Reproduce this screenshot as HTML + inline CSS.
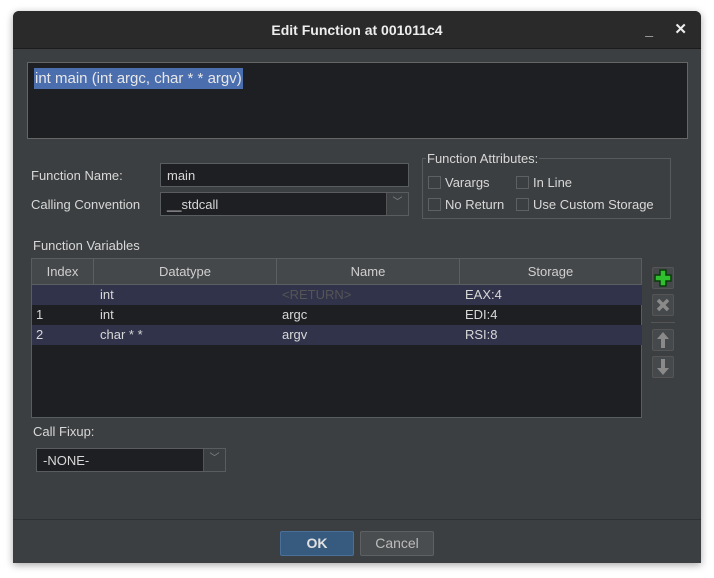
<!DOCTYPE html>
<html><head><style>
*{box-sizing:border-box;margin:0;padding:0}
body{width:714px;height:578px;background:#fff;font-family:"Liberation Sans",sans-serif;font-size:13px;color:#d8d8d8;position:relative;overflow:hidden}
.a{position:absolute}
.win{left:13px;top:11px;width:688px;height:552px;background:#3c3f41;border-radius:6px 6px 0 0;box-shadow:0 2px 8px rgba(0,0,0,.35);overflow:hidden}
.title{left:0;top:0;width:688px;height:38px;background:#2a2a2a;border-bottom:1px solid #1c1c1c;color:#eee;font-weight:bold;font-size:14px;text-align:center;line-height:38px}
.inp{background:#1e1f22;border:1px solid #5a5d60}
.cb{width:13px;height:13px;border:1px solid #5e6164;background:#3c3f41;display:inline-block;vertical-align:-2px;margin-right:4px}
.th{background:#45484a;border-right:1px solid #5c5f61;text-align:center;line-height:25px;color:#cfcfcf}
.row{left:0;width:610px;height:20px;line-height:20px}
.row span{position:absolute}
.ib{width:22px;height:22px;border:1px solid #555;border-radius:2px;background:#46494b}
</style></head><body>
<div class="a win">
 <div class="a title">Edit Function at 001011c4<span class="a" style="right:48px;top:0">_</span><span class="a" style="right:14px;top:0;font-size:15px">✕</span></div>
 <div class="a inp" style="left:14px;top:51px;width:661px;height:77px;border-color:#666">
  <span class="a" style="left:6px;top:5px;background:#4b6eaf;color:#e8e8e8;font-size:15px;padding:1px 1px;line-height:19px">int main (int argc, char * * argv)</span>
 </div>
 <div class="a" style="left:18px;top:157px">Function Name:</div>
 <div class="a inp" style="left:147px;top:152px;width:249px;height:24px;padding:4px 6px">main</div>
 <div class="a" style="left:18px;top:186px">Calling Convention</div>
 <div class="a inp" style="left:147px;top:181px;width:249px;height:24px;padding:4px 6px">__stdcall<span class="a" style="right:0;top:0;width:22px;height:22px;background:#3c3f41;border-left:1px solid #555;text-align:center;line-height:20px;color:#888;font-size:10px">﹀</span></div>
 <div class="a" style="left:409px;top:147px;width:249px;height:61px;border:1px solid #585b5e"></div>
 <div class="a" style="left:413px;top:140px;background:#3c3f41;padding:0 1px">Function Attributes:</div>
 <div class="a" style="left:415px;top:164px"><span class="cb"></span>Varargs</div>
 <div class="a" style="left:503px;top:164px"><span class="cb"></span>In Line</div>
 <div class="a" style="left:415px;top:186px"><span class="cb"></span>No Return</div>
 <div class="a" style="left:503px;top:186px"><span class="cb"></span>Use Custom Storage</div>
 <div class="a" style="left:20px;top:227px">Function Variables</div>
 <div class="a" style="left:18px;top:247px;width:611px;height:160px;background:#1e1f22;border:1px solid #5a5d60">
  <div class="a th" style="left:0;top:0;width:62px;height:25px">Index</div>
  <div class="a th" style="left:62px;top:0;width:183px;height:25px">Datatype</div>
  <div class="a th" style="left:245px;top:0;width:183px;height:25px">Name</div>
  <div class="a th" style="left:428px;top:0;width:181px;height:25px;border-right:0">Storage</div>
  <div class="a" style="left:0;top:25px;width:609px;height:1px;background:#5c5f61"></div>
  <div class="a row" style="top:26px;background:#30334a"><span style="left:68px">int</span><span style="left:250px;color:#555">&lt;RETURN&gt;</span><span style="left:433px">EAX:4</span></div>
  <div class="a row" style="top:46px"><span style="left:4px">1</span><span style="left:68px">int</span><span style="left:250px">argc</span><span style="left:433px">EDI:4</span></div>
  <div class="a row" style="top:66px;background:#30334a"><span style="left:4px">2</span><span style="left:68px">char * *</span><span style="left:250px">argv</span><span style="left:433px">RSI:8</span></div>
 </div>
 <div class="a ib" style="left:639px;top:256px"><svg width="20" height="20" viewBox="0 0 20 20"><path d="M7 2h6v5h5v6h-5v5H7v-5H2V7h5z" fill="#2fbf2f" stroke="#0a3a0a" stroke-width="1.5"/></svg></div>
 <div class="a ib" style="left:639px;top:283px"><svg width="20" height="20" viewBox="0 0 20 20"><path d="M5 5l10 10M15 5L5 15" stroke="#8a8a8a" stroke-width="3.5"/></svg></div>
 <div class="a" style="left:638px;top:311px;width:24px;height:1px;background:#555"></div>
 <div class="a ib" style="left:639px;top:318px"><svg width="20" height="20" viewBox="0 0 20 20"><path d="M10 2l6 7h-4v9H8V9H4z" fill="#8a8a8a"/></svg></div>
 <div class="a ib" style="left:639px;top:345px"><svg width="20" height="20" viewBox="0 0 20 20"><path d="M10 18l6-7h-4V2H8v9H4z" fill="#8a8a8a"/></svg></div>
 <div class="a" style="left:20px;top:413px">Call Fixup:</div>
 <div class="a inp" style="left:23px;top:437px;width:190px;height:24px;padding:4px 6px">-NONE-<span class="a" style="right:0;top:0;width:22px;height:22px;background:#3c3f41;border-left:1px solid #555;text-align:center;line-height:20px;color:#888;font-size:10px">﹀</span></div>
 <div class="a" style="left:0;top:508px;width:688px;height:1px;background:#2e3032"></div>
 <div class="a" style="left:267px;top:520px;width:74px;height:25px;background:#375a7f;border:1px solid #4a6f99;border-radius:2px;text-align:center;line-height:23px;font-weight:bold;color:#e0e0e0;font-size:14px">OK</div>
 <div class="a" style="left:347px;top:520px;width:74px;height:25px;background:#4a4d4f;border:1px solid #5e6163;border-radius:2px;text-align:center;line-height:23px;color:#bbb;font-size:14px">Cancel</div>
</div>
</body></html>
